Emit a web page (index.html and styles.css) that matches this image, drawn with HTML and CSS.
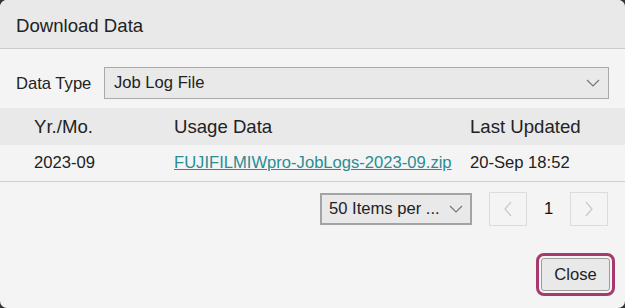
FILE: index.html
```html
<!DOCTYPE html>
<html lang="en">
<head>
    <meta charset="UTF-8" />
    <title>Download Data</title>
    <link rel="stylesheet" href="styles.css">
</head>
<body>

<div class="dialog">
    <div class="dialog-header">Download Data</div>

    <div class="type-row">
        <label class="type-label">Data Type</label>
        <div class="select type-select">
            <span>Job Log File</span>
            <svg class="chev" width="14" height="8" viewBox="0 0 14 8"><polyline points="1,1 7,7 13,1" fill="none" stroke="#777" stroke-width="1.2"/></svg>
        </div>
    </div>

    <table class="data-table">
        <thead>
            <tr>
                <th class="col-month">Yr./Mo.</th>
                <th class="col-file">Usage Data</th>
                <th class="col-date">Last Updated</th>
            </tr>
        </thead>
        <tbody>
            <tr>
                <td>2023-09</td>
                <td><a href="#" class="file-link">FUJIFILMIWpro-JobLogs-2023-09.zip</a></td>
                <td>20-Sep 18:52</td>
            </tr>
        </tbody>
    </table>

    <div class="pager">
        <div class="select per-page">
            <span>50 Items per ...</span>
            <svg class="chev" width="14" height="8" viewBox="0 0 14 8"><polyline points="1,1 7,7 13,1" fill="none" stroke="#777" stroke-width="1.2"/></svg>
        </div>
        <div class="page-btn">
            <svg width="8" height="16" viewBox="0 0 8 16"><polyline points="7,1 1,8 7,15" fill="none" stroke="#c8c8c8" stroke-width="1.2"/></svg>
        </div>
        <span class="page-num">1</span>
        <div class="page-btn">
            <svg width="8" height="16" viewBox="0 0 8 16"><polyline points="1,1 7,8 1,15" fill="none" stroke="#c8c8c8" stroke-width="1.2"/></svg>
        </div>
    </div>

    <div class="dialog-footer">
        <button class="close-btn">Close</button>
    </div>
</div>

</body>
</html>
```

FILE: styles.css
```css
body {
    margin: 0;
    background-color: #333;
    font-family: "Liberation Sans", Arial, sans-serif;
    color: #222;
}

.dialog {
    height: 308px;
    background-color: #f4f4f4;
    border-radius: 7px;
    display: flex;
    flex-direction: column;
    overflow: hidden;
}

.dialog-header {
    height: 48px;
    line-height: 51px;
    padding-left: 16px;
    background-color: #e9e9e9;
    border-bottom: 1px solid #cbcbcb;
    font-size: 18.6px;
    color: #222;
}

.type-row {
    display: flex;
    align-items: center;
    margin: 18px 16px 0 16px;
}

.type-label {
    font-size: 16.6px;
    width: 88px;
    padding-top: 1px;
}

.select {
    display: flex;
    align-items: center;
    justify-content: space-between;
    height: 30px;
    background-color: #e9e9e9;
    border: 1px solid #a9a9a9;
    font-size: 16.6px;
    box-sizing: content-box;
}

.type-select {
    flex: 1;
    padding: 0 8px 0 9px;
}

.data-table {
    width: 100%;
    margin-top: 9px;
    border-collapse: collapse;
}

.data-table th {
    height: 37px;
    background-color: #e9e9e9;
    font-weight: normal;
    text-align: left;
    font-size: 18.6px;
    padding: 0;
}

.data-table td {
    height: 36px;
    border-bottom: 1px solid #cfcfcf;
    font-size: 16.6px;
    padding: 0;
}

.data-table th:first-child,
.data-table td:first-child {
    padding-left: 34px;
    width: 140px;
}

.col-file {
    width: 296px;
}

.file-link {
    color: #2b8c93;
    text-decoration: underline;
}

.pager {
    display: flex;
    justify-content: flex-end;
    align-items: center;
    margin: 10px 17px 0 0;
}

.per-page {
    width: 134px;
    padding: 0 7px 0 7px;
    margin-right: 17px;
    border-width: 2px;
    border-color: #a4a4a4;
    height: 28px;
}

.page-btn {
    width: 36px;
    height: 32px;
    border: 1px solid #dcdcdc;
    display: flex;
    align-items: center;
    justify-content: center;
}

.page-num {
    width: 43px;
    text-align: center;
    font-size: 16.6px;
    color: #111;
}

.dialog-footer {
    display: flex;
    justify-content: flex-end;
    margin-top: auto;
    padding: 0 15px 17px 0;
}

.close-btn {
    width: 69px;
    height: 33px;
    background-color: #e9e9e9;
    border: 1px solid #9d9d9d;
    border-radius: 3px;
    font-family: "Liberation Sans", Arial, sans-serif;
    font-size: 16.6px;
    color: #222;
    outline: 3px solid #a63a6b;
    outline-offset: 2px;
    padding: 0;
}
```
